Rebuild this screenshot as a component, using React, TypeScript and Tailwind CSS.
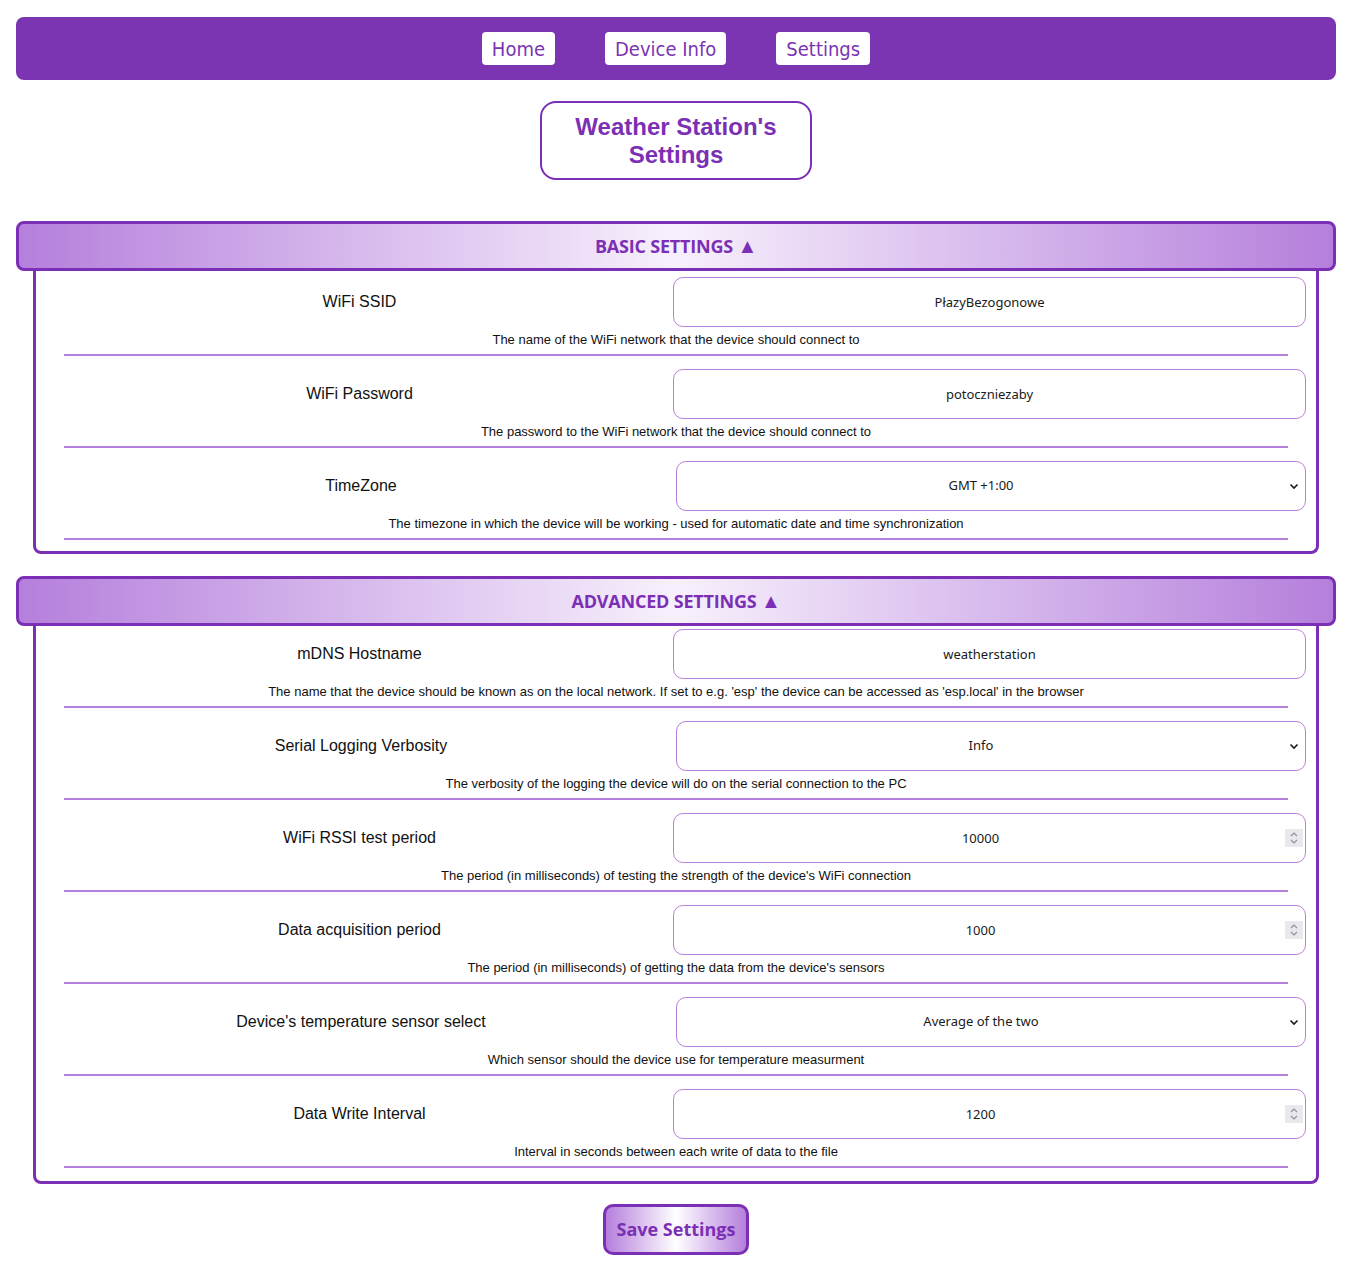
import React from "react";

type Field = {
  label: string;
  help: string;
  kind: "text" | "number" | "select";
  value: string;
  options?: string[];
};

const basic: Field[] = [
  {
    label: "WiFi SSID",
    help: "The name of the WiFi network that the device should connect to",
    kind: "text",
    value: "PłazyBezogonowe",
  },
  {
    label: "WiFi Password",
    help: "The password to the WiFi network that the device should connect to",
    kind: "text",
    value: "potoczniezaby",
  },
  {
    label: "TimeZone",
    help: "The timezone in which the device will be working - used for automatic date and time synchronization",
    kind: "select",
    value: "GMT +1:00",
    options: ["GMT +0:00", "GMT +1:00", "GMT +2:00"],
  },
];

const advanced: Field[] = [
  {
    label: "mDNS Hostname",
    help: "The name that the device should be known as on the local network. If set to e.g. 'esp' the device can be accessed as 'esp.local' in the browser",
    kind: "text",
    value: "weatherstation",
  },
  {
    label: "Serial Logging Verbosity",
    help: "The verbosity of the logging the device will do on the serial connection to the PC",
    kind: "select",
    value: "Info",
    options: ["None", "Error", "Warning", "Info", "Debug"],
  },
  {
    label: "WiFi RSSI test period",
    help: "The period (in milliseconds) of testing the strength of the device's WiFi connection",
    kind: "number",
    value: "10000",
  },
  {
    label: "Data acquisition period",
    help: "The period (in milliseconds) of getting the data from the device's sensors",
    kind: "number",
    value: "1000",
  },
  {
    label: "Device's temperature sensor select",
    help: "Which sensor should the device use for temperature measurment",
    kind: "select",
    value: "Average of the two",
    options: ["Sensor 1", "Sensor 2", "Average of the two"],
  },
  {
    label: "Data Write Interval",
    help: "Interval in seconds between each write of data to the file",
    kind: "number",
    value: "1200",
  },
];

const inputBase =
  "h-[50px] w-full border border-[#b57fdc] rounded-[10px] bg-white text-center text-[13px] text-[#1a1a1a] outline-none [font-family:'Noto_Sans',sans-serif]";

function Control({ f }: { f: Field }) {
  if (f.kind === "select") {
    return (
      <div className="relative w-[630px] shrink-0">
        <select
          defaultValue={f.value}
          className={inputBase + " appearance-none pr-[20px] [text-align-last:center]"}
        >
          {f.options!.map((o) => (
            <option key={o}>{o}</option>
          ))}
        </select>
        <svg
          className="pointer-events-none absolute right-[6px] top-1/2 -translate-y-1/2"
          width="12"
          height="12"
          viewBox="0 0 12 12"
        >
          <path d="M2.5 4.5 L6 8 L9.5 4.5" fill="none" stroke="#1a1a1a" strokeWidth="1.6" />
        </svg>
      </div>
    );
  }
  return (
    <div className="relative w-[633px] shrink-0">
      <input
        type="text"
        defaultValue={f.value}
        className={inputBase + (f.kind === "number" ? " pr-[18px]" : "")}
      />
      {f.kind === "number" && (
        <div className="pointer-events-none absolute right-[3px] top-1/2 -translate-y-1/2 w-[18px] h-[18px] bg-[#e9e9ed] flex items-center justify-center">
          <svg width="10" height="14" viewBox="0 0 10 14">
            <path d="M2 5 L5 2 L8 5" fill="none" stroke="#8f8f9d" strokeWidth="1.2" />
            <path d="M2 9 L5 12 L8 9" fill="none" stroke="#8f8f9d" strokeWidth="1.2" />
          </svg>
        </div>
      )}
    </div>
  );
}

function Row({ f }: { f: Field }) {
  return (
    <div>
      <div className="flex items-center pl-[28px] pr-[10px] gap-[18px]">
        <label className="flex-1 text-center text-[16px] text-[#111] [font-family:'Liberation_Sans',Arial,sans-serif]">
          {f.label}
        </label>
        <Control f={f} />
      </div>
      <p className="mt-[5px] text-center text-[13px] leading-[16px] text-[#111] [font-family:'Liberation_Sans',Arial,sans-serif]">
        {f.help}
      </p>
      <div className="mx-[28px] mt-[6px] h-[2px] bg-[#b57fdc]" />
    </div>
  );
}

function Section({ title, fields, first }: { title: string; fields: Field[]; first?: boolean }) {
  return (
    <section>
      <div className="h-[50px] border-[3px] border-[#7b2fb5] rounded-[8px] bg-[linear-gradient(to_right,#b57fdc,#f7f0fc_50%,#b57fdc)] flex items-center justify-center">
        <h2 className="text-[18px] font-bold text-[#7b2fb5] [font-family:'Open_Sans',sans-serif] tracking-[-0.2px]">
          {title} <span className="text-[20px] leading-none">▲</span>
        </h2>
      </div>
      <div
        className={
          "mx-[17px] border-x-[3px] border-b-[3px] border-[#7b2fb5] rounded-b-[8px] flex flex-col gap-[13px] " +
          (first ? "pt-[6px] pb-[11px]" : "pt-[3px] pb-[13px]")
        }
      >
        {fields.map((f) => (
          <Row key={f.label} f={f} />
        ))}
      </div>
    </section>
  );
}

export default function App() {
  const navLinks = ["Home", "Device Info", "Settings"];
  return (
    <div className="min-h-screen bg-white pl-[16px] pr-[17px] pt-[17px] pb-[20px]">
      <nav className="h-[63px] bg-[#7b35b3] rounded-[8px] flex items-center justify-center gap-[50px]">
        {navLinks.map((l) => (
          <a
            key={l}
            href="#"
            className="h-[33px] px-[10px] bg-white rounded-[4px] flex items-center text-[20px] text-[#7b35b3] [font-family:'DejaVu_Sans_Condensed','DejaVu_Sans',sans-serif]"
          >
            {l}
          </a>
        ))}
      </nav>

      <div className="flex justify-center mt-[21px]">
        <h1 className="w-[272px] h-[79px] border-2 border-[#7b2fb5] rounded-[16px] flex items-center justify-center text-center text-[24px] leading-[28px] font-bold text-[#7b2fb5] [font-family:'Liberation_Sans',Arial,sans-serif]">
          Weather Station's
          <br />
          Settings
        </h1>
      </div>

      <div className="mt-[41px]">
        <Section title="BASIC SETTINGS" fields={basic} first />
      </div>
      <div className="mt-[22px]">
        <Section title="ADVANCED SETTINGS" fields={advanced} />
      </div>

      <div className="flex justify-center mt-[20px]">
        <button className="w-[146px] h-[51px] border-[3px] border-[#7b2fb5] rounded-[10px] bg-[linear-gradient(to_right,#b57fdc,#ffffff_50%,#b57fdc)] text-[18px] font-bold text-[#7b2fb5] [font-family:'Open_Sans',sans-serif]">
          Save Settings
        </button>
      </div>
    </div>
  );
}
